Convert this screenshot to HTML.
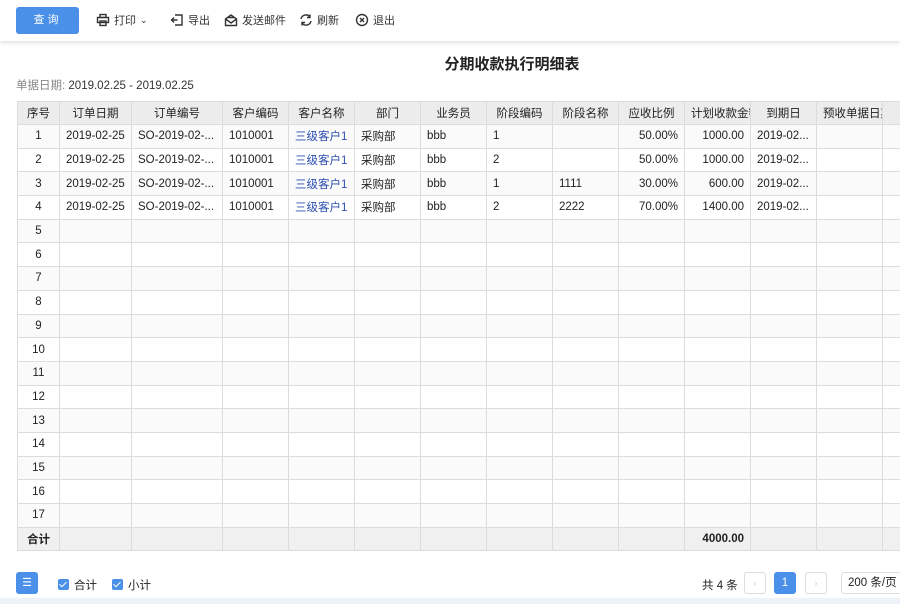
<!DOCTYPE html>
<html><head><meta charset="utf-8"><style>
*{box-sizing:border-box;margin:0;padding:0}
body{width:900px;height:604px;overflow:hidden;background:#fff;font-family:"Liberation Sans","Noto Sans CJK SC",sans-serif;font-size:11.5px;color:#222;position:relative}
.tb{position:absolute;left:0;top:0;width:900px;height:41px;background:#fff;box-shadow:0 2px 4px rgba(0,0,0,.12)}
.btn{position:absolute;left:16px;top:7px;width:63px;height:27px;background:#4a8fe8;border-radius:3px;color:#fff;font-size:11px;text-align:center;line-height:27px;letter-spacing:3px}
.ti{position:absolute;top:12px;font-size:11px;color:#333;display:flex;align-items:center;gap:4px}
.ti svg{width:14px;height:14px}
h1{position:absolute;top:53px;left:0;width:1024px;text-align:center;font-size:15px;font-weight:bold}
.dt{position:absolute;left:16px;top:77px;font-size:11.5px;color:#333}
.dt span{color:#888}
table{position:absolute;left:17px;top:101px;border-collapse:collapse;table-layout:fixed;width:900px}
td,th{border:1px solid #dcdcdc;height:23.7px;padding:0 6px;white-space:nowrap;overflow:hidden;font-weight:normal}
th{background:#ececec;font-size:11.5px;text-align:center;height:23px}
tr:nth-child(even) td{background:#fafafa}
.c{text-align:center}.r{text-align:right}.b{color:#2a4fb0}
tr.tot td{background:#f0f0f0;font-weight:bold}
.foot{position:absolute;top:572px}
.cb{display:inline-block;width:11px;height:11px;background:#4a8fe8;border-radius:2px;vertical-align:-1px;margin-right:5px;position:relative}
.cb:after{content:"";position:absolute;left:3px;top:1px;width:3px;height:6px;border:solid #fff;border-width:0 1.5px 1.5px 0;transform:rotate(45deg)}
</style></head><body>
<div class="tb">
<div class="btn">查询</div>
<div class="ti" style="left:96px"><svg viewBox="0 0 14 14" fill="none" stroke="#333" stroke-width="1.4"><rect x="4" y="1.5" width="6" height="3"/><rect x="1.5" y="4.5" width="11" height="5"/><rect x="4" y="8" width="6" height="4.5"/></svg>打印<span style="font-size:9px">&#8964;</span></div>
<div class="ti" style="left:170px"><svg viewBox="0 0 14 14" fill="none" stroke="#333" stroke-width="1.4"><path d="M5 2h7v10H5M1.5 7h6M4 4.5L1.5 7 4 9.5"/></svg>导出</div>
<div class="ti" style="left:224px"><svg viewBox="0 0 14 14" fill="none" stroke="#333" stroke-width="1.4"><path d="M1.5 6l5.5-4 5.5 4v6.5h-11zM1.5 6l5.5 4 5.5-4M4 4.5h6"/></svg>发送邮件</div>
<div class="ti" style="left:299px"><svg viewBox="0 0 14 14" fill="none" stroke="#333" stroke-width="1.4"><path d="M2 6a5 5 0 0 1 9-2M12 8a5 5 0 0 1-9 2M11 1.5v3H8M3 12.5v-3h3"/></svg>刷新</div>
<div class="ti" style="left:355px"><svg viewBox="0 0 14 14" fill="none" stroke="#333" stroke-width="1.4"><circle cx="7" cy="7" r="5.5"/><path d="M5 5l4 4M9 5l-4 4"/></svg>退出</div>
</div>
<h1>分期收款执行明细表</h1>
<div class="dt"><span>单据日期:</span> 2019.02.25 - 2019.02.25</div>
<table>
<colgroup><col style="width:42px"><col style="width:72px"><col style="width:91px"><col style="width:66px"><col style="width:66px"><col style="width:66px"><col style="width:66px"><col style="width:66px"><col style="width:66px"><col style="width:66px"><col style="width:66px"><col style="width:66px"><col style="width:66px"><col style="width:71px"></colgroup>
<tr><th>序号</th><th>订单日期</th><th>订单编号</th><th>客户编码</th><th>客户名称</th><th>部门</th><th>业务员</th><th>阶段编码</th><th>阶段名称</th><th>应收比例</th><th>计划收款金额</th><th>到期日</th><th>预收单据日期</th><th>预</th></tr>
<tr><td class="c">1</td><td>2019-02-25</td><td>SO-2019-02-...</td><td>1010001</td><td class="b">三级客户1</td><td>采购部</td><td>bbb</td><td>1</td><td></td><td class="r">50.00%</td><td class="r">1000.00</td><td>2019-02...</td><td></td><td></td></tr>
<tr><td class="c">2</td><td>2019-02-25</td><td>SO-2019-02-...</td><td>1010001</td><td class="b">三级客户1</td><td>采购部</td><td>bbb</td><td>2</td><td></td><td class="r">50.00%</td><td class="r">1000.00</td><td>2019-02...</td><td></td><td></td></tr>
<tr><td class="c">3</td><td>2019-02-25</td><td>SO-2019-02-...</td><td>1010001</td><td class="b">三级客户1</td><td>采购部</td><td>bbb</td><td>1</td><td>1111</td><td class="r">30.00%</td><td class="r">600.00</td><td>2019-02...</td><td></td><td></td></tr>
<tr><td class="c">4</td><td>2019-02-25</td><td>SO-2019-02-...</td><td>1010001</td><td class="b">三级客户1</td><td>采购部</td><td>bbb</td><td>2</td><td>2222</td><td class="r">70.00%</td><td class="r">1400.00</td><td>2019-02...</td><td></td><td></td></tr>
<tr><td class="c">5</td><td></td><td></td><td></td><td></td><td></td><td></td><td></td><td></td><td></td><td></td><td></td><td></td><td></td></tr>
<tr><td class="c">6</td><td></td><td></td><td></td><td></td><td></td><td></td><td></td><td></td><td></td><td></td><td></td><td></td><td></td></tr>
<tr><td class="c">7</td><td></td><td></td><td></td><td></td><td></td><td></td><td></td><td></td><td></td><td></td><td></td><td></td><td></td></tr>
<tr><td class="c">8</td><td></td><td></td><td></td><td></td><td></td><td></td><td></td><td></td><td></td><td></td><td></td><td></td><td></td></tr>
<tr><td class="c">9</td><td></td><td></td><td></td><td></td><td></td><td></td><td></td><td></td><td></td><td></td><td></td><td></td><td></td></tr>
<tr><td class="c">10</td><td></td><td></td><td></td><td></td><td></td><td></td><td></td><td></td><td></td><td></td><td></td><td></td><td></td></tr>
<tr><td class="c">11</td><td></td><td></td><td></td><td></td><td></td><td></td><td></td><td></td><td></td><td></td><td></td><td></td><td></td></tr>
<tr><td class="c">12</td><td></td><td></td><td></td><td></td><td></td><td></td><td></td><td></td><td></td><td></td><td></td><td></td><td></td></tr>
<tr><td class="c">13</td><td></td><td></td><td></td><td></td><td></td><td></td><td></td><td></td><td></td><td></td><td></td><td></td><td></td></tr>
<tr><td class="c">14</td><td></td><td></td><td></td><td></td><td></td><td></td><td></td><td></td><td></td><td></td><td></td><td></td><td></td></tr>
<tr><td class="c">15</td><td></td><td></td><td></td><td></td><td></td><td></td><td></td><td></td><td></td><td></td><td></td><td></td><td></td></tr>
<tr><td class="c">16</td><td></td><td></td><td></td><td></td><td></td><td></td><td></td><td></td><td></td><td></td><td></td><td></td><td></td></tr>
<tr><td class="c">17</td><td></td><td></td><td></td><td></td><td></td><td></td><td></td><td></td><td></td><td></td><td></td><td></td><td></td></tr>
<tr class="tot"><td class="c">合计</td><td></td><td></td><td></td><td></td><td></td><td></td><td></td><td></td><td></td><td class="r">4000.00</td><td></td><td></td><td></td></tr>
</table>
<div class="foot" style="left:16px;width:22px;height:22px;background:#4a8fe8;border-radius:3px;color:#fff;text-align:center;line-height:22px;font-size:11px">☰</div>
<div class="foot" style="left:58px;top:577px"><span class="cb"></span>合计</div>
<div class="foot" style="left:112px;top:577px"><span class="cb"></span>小计</div>
<div class="foot" style="left:702px;top:577px">共 4 条</div>
<div class="foot" style="left:744px;width:22px;height:22px;border:1px solid #ddd;border-radius:3px;color:#ccc;text-align:center;line-height:20px;font-size:9px">‹</div>
<div class="foot" style="left:774px;width:22px;height:22px;background:#4a8fe8;border-radius:3px;color:#fff;text-align:center;line-height:22px">1</div>
<div class="foot" style="left:805px;width:22px;height:22px;border:1px solid #ddd;border-radius:3px;color:#ccc;text-align:center;line-height:20px;font-size:9px">›</div>
<div class="foot" style="left:841px;width:70px;height:22px;border:1px solid #ddd;border-radius:3px;line-height:20px;padding-left:6px">200 条/页</div>
<div style="position:absolute;left:0;top:598px;width:900px;height:6px;background:#eef3fa"></div>
</body></html>
